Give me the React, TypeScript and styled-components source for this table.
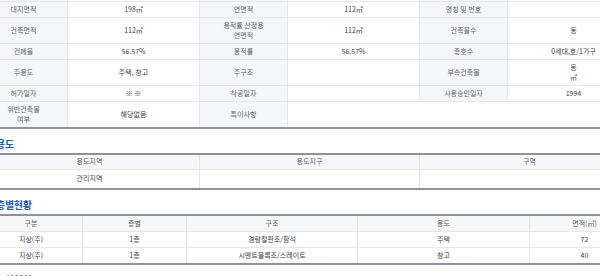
import React from 'react';
import styled, {createGlobalStyle} from "styled-components";

const GlobalStyle = createGlobalStyle`
    * {
        box-sizing: border-box;
    }
    body {
        margin: 0;
        background: #ffffff;
        overflow: hidden;
        font-family: "Noto Sans CJK KR", "Noto Sans", sans-serif;
    }
`

const Page = styled.div`
    width: 660px;
    margin-left: -20px;
    margin-top: -14px;
`

const Title = styled.h3`
    margin: 0;
    padding: 8px 0 2px 16px;
    font-size: 10px;
    line-height: 14px;
    font-weight: 700;
    color: #1d5cad;
    letter-spacing: -0.3px;
`

const Table = styled.table`
    width: 660px;
    table-layout: fixed;
    border-collapse: separate;
    border-spacing: 0;
    border-top: 2px solid #8c919a;
    border-bottom: 2px solid #8c919a;
`

const OpenTable = styled(Table)`
    border-top: none;
`

type RowProps = {
    $h?: number
}

const Row = styled.tr<RowProps>`
    & > td, & > th {
        height: ${props => props.$h || 16}px;
    }
    &:last-child > td, &:last-child > th {
        border-bottom: none;
    }
`

const Label = styled.th`
    padding: 0 3px;
    font-size: 7px;
    line-height: 9.5px;
    font-weight: 400;
    color: #5f6369;
    background: #f4f6f9;
    text-align: center;
    vertical-align: middle;
    border-bottom: 1px solid #e3e6ea;
    border-right: 1px solid #e3e6ea;
    white-space: pre-line;
`

const HeadCell = styled(Label)`
    background: #f6f7f9;
`

const Cell = styled.td`
    padding: 0 3px;
    font-size: 7px;
    line-height: 9.5px;
    color: #3b3e43;
    background: #ffffff;
    text-align: center;
    vertical-align: middle;
    border-bottom: 1px solid #e3e6ea;
    border-right: 1px solid #e3e6ea;
    white-space: pre-line;
`

const Cols = ({widths}: {widths: number[]}) => (
    <colgroup>
        {widths.map((w, i) => <col key={i} style={{width: w}}/>)}
    </colgroup>
)

const ledger = [
    {h: 16, cells: [['', ''], ['', ''], ['', '']]},
    {h: 16, cells: [['대지면적', '198㎡'], ['연면적', '112㎡'], ['명칭 및 번호', '']]},
    {h: 26, cells: [['건축면적', '112㎡'], ['용적률 산정용\n연면적', '112㎡'], ['건축물수', '동']]},
    {h: 16, cells: [['건폐율', '56.57%'], ['용적률', '56.57%'], ['총호수', '0세대,호/1가구']]},
    {h: 26, cells: [['주용도', '주택, 창고'], ['주구조', ''], ['부속건축물', '동\n㎡']]},
    {h: 16, cells: [['허가일자', '※ ※'], ['착공일자', ''], ['사용승인일자', '1994']]},
]

const floors = [
    ['지상(주)', '1층', '경량철판조/함석', '주택', '72'],
    ['지상(주)', '1층', '시멘트블록조/스레이트', '창고', '40'],
]

export default function App() {
    return (
        <>
            <GlobalStyle/>
            <Page>
                <OpenTable>
                    <Cols widths={[88, 132, 88, 132, 88, 132]}/>
                    <tbody>
                        {ledger.map((r, i) => (
                            <Row key={i} $h={r.h}>
                                {r.cells.map(([l, v], j) => (
                                    <React.Fragment key={j}>
                                        <Label>{l}</Label>
                                        <Cell>{v}</Cell>
                                    </React.Fragment>
                                ))}
                            </Row>
                        ))}
                        <Row $h={25}>
                            <Label>{'위반건축물\n여부'}</Label>
                            <Cell>해당없음</Cell>
                            <Label>특이사항</Label>
                            <Cell colSpan={3}></Cell>
                        </Row>
                    </tbody>
                </OpenTable>

                <Title>용도</Title>
                <Table>
                    <Cols widths={[220, 220, 220]}/>
                    <tbody>
                        <Row $h={15}>
                            <HeadCell>용도지역</HeadCell>
                            <HeadCell>용도지구</HeadCell>
                            <HeadCell>구역</HeadCell>
                        </Row>
                        <Row $h={18}>
                            <Cell>관리지역</Cell>
                            <Cell></Cell>
                            <Cell></Cell>
                        </Row>
                    </tbody>
                </Table>

                <Title>층별현황</Title>
                <Table>
                    <Cols widths={[103, 104, 171, 172, 110]}/>
                    <tbody>
                        <Row $h={16}>
                            <HeadCell>구분</HeadCell>
                            <HeadCell>층별</HeadCell>
                            <HeadCell>구조</HeadCell>
                            <HeadCell>용도</HeadCell>
                            <HeadCell>면적(㎡)</HeadCell>
                        </Row>
                        {floors.map((f, i) => (
                            <Row key={i} $h={i === floors.length - 1 ? 15 : 16}>
                                {f.map((v, j) => <Cell key={j}>{v}</Cell>)}
                            </Row>
                        ))}
                    </tbody>
                </Table>

                <Title>주차현황</Title>
            </Page>
        </>
    );
}
